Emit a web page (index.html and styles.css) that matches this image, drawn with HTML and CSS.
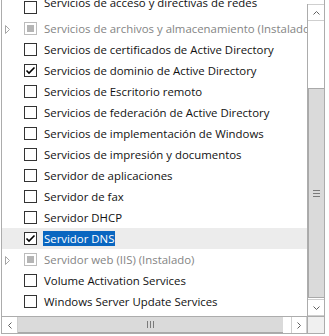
FILE: index.html
```html
<!doctype html>
<html lang="es">
<head>
  <meta charset="utf-8" />
  <title>Roles de servidor</title>
  <link rel="stylesheet" href="styles.css">
</head>
<body>
  <div class="frame">
    <div class="list">
      <div class="rows">
        <div class="row first"><span class="box"></span><span class="label">Servicios de acceso y directivas de redes</span></div>
        <div class="row off"><svg class="exp" width="5" height="9" viewBox="0 0 5 9"><polygon points="0.5,0.5 4.5,4.5 0.5,8.5"/></svg><span class="box part"><i></i></span><span class="label">Servicios de archivos y almacenamiento (Instalado)</span></div>
        <div class="row"><span class="box"></span><span class="label">Servicios de certificados de Active Directory</span></div>
        <div class="row"><span class="box"><svg width="11" height="11" viewBox="0 0 11 11"><polyline points="1.5,5.5 4,8 9.5,2.5"/></svg></span><span class="label">Servicios de dominio de Active Directory</span></div>
        <div class="row"><span class="box"></span><span class="label">Servicios de Escritorio remoto</span></div>
        <div class="row"><span class="box"></span><span class="label">Servicios de federación de Active Directory</span></div>
        <div class="row"><span class="box"></span><span class="label">Servicios de implementación de Windows</span></div>
        <div class="row"><span class="box"></span><span class="label">Servicios de impresión y documentos</span></div>
        <div class="row"><span class="box"></span><span class="label">Servidor de aplicaciones</span></div>
        <div class="row"><span class="box"></span><span class="label">Servidor de fax</span></div>
        <div class="row"><span class="box"></span><span class="label">Servidor DHCP</span></div>
        <div class="row hover"><span class="box"><svg width="11" height="11" viewBox="0 0 11 11"><polyline points="1.5,5.5 4,8 9.5,2.5"/></svg></span><span class="label sel">Servidor DNS</span></div>
        <div class="row off"><svg class="exp" width="5" height="9" viewBox="0 0 5 9"><polygon points="0.5,0.5 4.5,4.5 0.5,8.5"/></svg><span class="box part"><i></i></span><span class="label">Servidor web (IIS) (Instalado)</span></div>
        <div class="row"><span class="box"></span><span class="label">Volume Activation Services</span></div>
        <div class="row"><span class="box"></span><span class="label">Windows Server Update Services</span></div>
      </div>
    </div>

    <!-- vertical scrollbar -->
    <div class="vbar">
      <div class="btn"><svg width="7" height="4" viewBox="0 0 7 4"><polyline points="0.5,3.5 3.5,0.5 6.5,3.5"/></svg></div>
      <div class="vtrack"></div>
      <div class="vthumb"><span class="grip"></span></div>
      <div class="vgap"></div>
      <div class="btn"><svg width="7" height="4" viewBox="0 0 7 4"><polyline points="0.5,0.5 3.5,3.5 6.5,0.5"/></svg></div>
    </div>

    <!-- horizontal scrollbar -->
    <div class="hbar">
      <div class="btn"><svg width="4" height="7" viewBox="0 0 4 7"><polyline points="3.5,0.5 0.5,3.5 3.5,6.5"/></svg></div>
      <div class="hthumb"><span class="grip"></span></div>
      <div class="hgap"></div>
      <div class="btn"><svg width="4" height="7" viewBox="0 0 4 7"><polyline points="0.5,0.5 3.5,3.5 0.5,6.5"/></svg></div>
    </div>
    <div class="corner"></div>
  </div>
</body>
</html>
```

FILE: styles.css
```css
:root{
  --font: "Open Sans", "Noto Sans", Arial, sans-serif;
  --edge: #acacac;
  --btn-edge: #cfcfcf;
  --thumb: #dadada;
  --thumb-edge: #a9a9a9;
  --muted: #848484;
  --sel: #0966c0;
}

*{ box-sizing:border-box }
body{ margin:0; background:#fff; font-family:var(--font); }

.frame{
  margin-left:1px;
  width:324px; height:334px;
  border:1px solid var(--edge);
  border-top:0;
  display:grid;
  grid-template-columns: 1fr 17px;
  grid-template-rows: 1fr 17px;
}

/* ---- list ---- */
.list{ overflow:hidden; }
.rows{ margin-top:-3px; }

.row{
  position:relative;
  height:21px;
  display:flex;
  align-items:flex-start;
  padding-left:22px;
  white-space:nowrap;
  color:#111;
  font-size:11.4px;
}
.row.hover{ background:#ececec; }
.row.off{ color:var(--muted); }

/* the top row is half-scrolled out of view */
.row.first .label{ margin-top:-2px; }

.exp{
  position:absolute;
  left:3px; top:7px;
  fill:none;
  stroke:#a6a6a6;
  stroke-width:1;
}

.box{
  flex:none;
  width:13px; height:13px;
  margin-top:4px;
  border:1px solid #333;
  background:#fff;
  display:grid;
  place-items:center;
}
.box svg{ fill:none; stroke:#000; stroke-width:1.6; }
.box.part{ border-color:#bcbcbc; }
.box.part i{ width:7px; height:7px; background:#b5b5b5; }

.label{
  margin-left:6px;
  margin-top:3px;
  padding:0 1px;
  height:15px;
  line-height:15px;
}
.label.sel{ background:var(--sel); color:#fff; }

/* ---- scrollbars ---- */
.btn{
  width:17px; height:17px;
  flex:none;
  display:grid;
  place-items:center;
  background:#fff;
  border:1px solid var(--btn-edge);
}
.btn svg{ fill:none; stroke:#606060; stroke-width:1; }

.vbar{
  margin-top:4px;
  border-left:1px solid var(--edge);
  display:flex;
  flex-direction:column;
}
.vbar .btn{ width:16px; border-left:0; border-right:0; }
.vtrack{ height:67px; flex:none; }
.vthumb{
  height:210px; flex:none;
  background:var(--thumb);
  border:1px solid var(--thumb-edge);
  border-right:0;
  display:grid;
  place-items:center;
}
.vgap{ height:1px; flex:none; }
.vthumb .grip{
  width:7px; height:7px;
  background: repeating-linear-gradient(#7a7a7a 0 1px, transparent 1px 3px);
  margin-left:-1px;
}

.hbar{
  border-top:1px solid var(--edge);
  display:flex;
}
.hbar .btn{ width:16px; height:16px; border-top:0; border-bottom:0; }
.hbar .btn:first-child{ border-left:0; }
.hthumb{
  width:265px; flex:none;
  background:var(--thumb);
  border-bottom:1px solid var(--thumb-edge);
  display:grid;
  place-items:center;
}
.hthumb .grip{
  width:7px; height:7px;
  background: repeating-linear-gradient(90deg, #7a7a7a 0 1px, transparent 1px 3px);
}
.hgap{ width:8px; flex:none; }

.corner{
  background:#f0f0f0;
  border-top:1px solid var(--edge);
  border-left:1px solid var(--edge);
}
```
